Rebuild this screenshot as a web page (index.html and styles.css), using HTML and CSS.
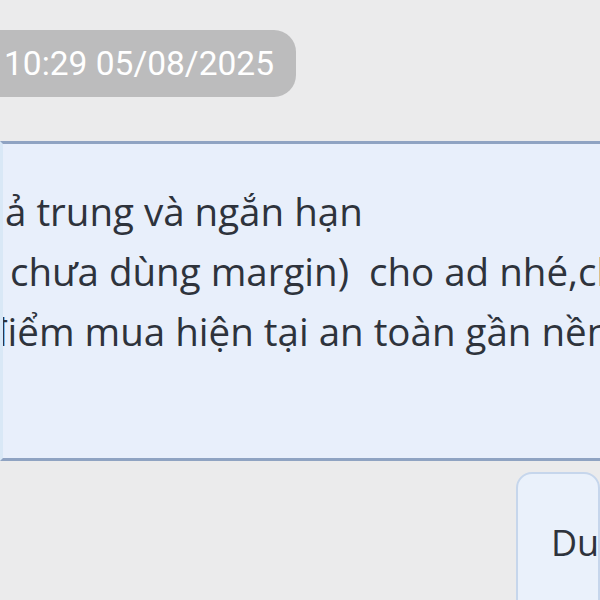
FILE: index.html
```html
<!DOCTYPE html>
<html lang="vi">
<head>
    <meta charset="UTF-8">
    <meta name="viewport" content="width=device-width, initial-scale=1.0">
    <title>Tin nhắn</title>
    <link rel="stylesheet" href="styles.css">
</head>
<body>
    <div class="chat">
        <div class="time-row">
            <span class="time-pill">10:29 05/08/2025</span>
        </div>

        <div class="message">
            <p class="line l1">ả trung và ngắn hạn</p>
            <p class="line l2">chưa dùng margin)&nbsp; cho ad nhé,chị</p>
            <p class="line l3">điểm mua hiện tại an toàn gần nền</p>
        </div>

        <div class="reply-row">
            <div class="reply">Dung</div>
        </div>
    </div>
</body>
</html>
```

FILE: styles.css
```css
body {
    margin: 0;
    background-color: #ebebec;
    font-family: "Open Sans", "Noto Sans", sans-serif;
    color: #2e333c;
    overflow: hidden;
}
.chat {
    width: 600px;
    height: 600px;
    overflow: hidden;
}
.time-row {
    padding-top: 30px;
}
.time-pill {
    display: inline-flex;
    align-items: center;
    height: 67px;
    margin-left: -20px;
    padding: 0 22px 0 24px;
    border-radius: 22px;
    background-color: #bcbcbd;
    color: #fff;
    font-family: Roboto, "Noto Sans", sans-serif;
    font-size: 33.5px;
}
.message {
    margin-top: 44px;
    height: 320px;
    padding-top: 37px;
    box-sizing: border-box;
    background-color: #e8effb;
    border-top: 3px solid #8fa3c2;
    border-bottom: 3px solid #8fa3c2;
    border-left: 3px solid #d9e8f6;
    overflow: hidden;
}
.line {
    margin: 0;
    font-size: 38.5px;
    line-height: 60px;
    white-space: nowrap;
}
.l1 {
    padding-left: 2px;
}
.l2 {
    padding-left: 7px;
}
.l3 {
    text-indent: -19px;
}
.reply-row {
    padding-top: 11px;
    padding-left: 516px;
}
.reply {
    height: 160px;
    padding: 44px 0 0 33px;
    box-sizing: border-box;
    background-color: #eaf1fb;
    border: 2px solid #c6d6ec;
    border-radius: 16px;
    font-size: 36px;
    white-space: nowrap;
    overflow: hidden;
}
```
